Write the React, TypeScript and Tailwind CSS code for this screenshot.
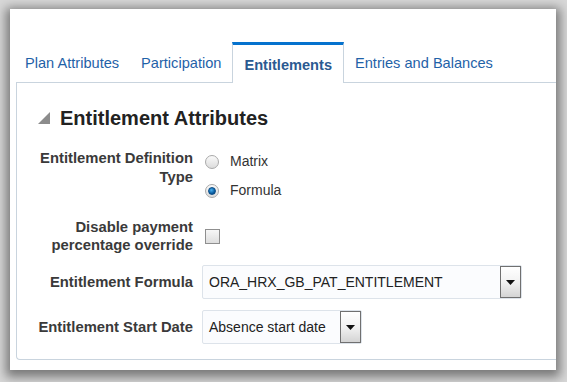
import React from 'react';

const tabs = ['Plan Attributes', 'Participation', 'Entitlements', 'Entries and Balances'];

function Radio({ checked }: { checked?: boolean }) {
  return (
    <span className="w-[14px] h-[14px] rounded-full border border-[#a9a9a9] bg-gradient-to-b from-[#fafafa] to-[#dcdcdc] flex items-center justify-center shrink-0">
      {checked && (
        <span className="w-[8px] h-[8px] rounded-full bg-[radial-gradient(circle_at_40%_35%,#4ab0f0,#0a5fa3_60%,#083f70)] border border-[#0b4c86]" />
      )}
    </span>
  );
}

function DropButton() {
  return (
    <span className="w-[21px] h-[32px] border border-[#707070] bg-gradient-to-b from-[#ffffff] via-[#f2f2f2] to-[#d4d4d4] flex items-center justify-center shrink-0">
      <svg width="9" height="5" viewBox="0 0 9 5">
        <path d="M0 0 L9 0 L4.5 5 Z" fill="#111" />
      </svg>
    </span>
  );
}

function Select({ value, width }: { value: string; width: string }) {
  return (
    <div className={`${width} h-[34px] border border-[#dde3ea] bg-[#fbfcfe] rounded-[2px] flex items-center justify-between pl-[6px]`}>
      <span className="text-[14px] text-[#222]">{value}</span>
      <DropButton />
    </div>
  );
}

export default function App() {
  return (
    <div
      className="w-[567px] h-[382px] bg-[#d8d8d8] pt-[9px] pl-[10px] overflow-hidden"
      style={{ fontFamily: '"Liberation Sans", Arial, sans-serif' }}
    >
      <div className="w-[546px] h-[361px] bg-white shadow-[0_3px_10px_4px_rgba(0,0,0,0.45)]">
        {/* tabs */}
        <div className="flex items-end pt-[33px] pl-[4px]">
          {tabs.map((t) =>
            t === 'Entitlements' ? (
              <div
                key={t}
                className="relative z-10 -mb-px h-[41px] px-[11px] pt-[3px] flex items-center border-t-[3px] border-t-[#0572ce] border-x border-x-[#c9d4de] bg-white text-[14.6px] font-bold text-[#2b5a91]"
              >
                {t}
              </div>
            ) : (
              <div key={t} className="h-[40px] px-[11px] pt-[3px] flex items-center text-[14.6px] text-[#1f62a8]">
                {t}
              </div>
            )
          )}
        </div>

        {/* panel */}
        <div className="ml-[6px] h-[278px] border border-r-0 border-[#c9d4de] rounded-bl-[4px]">
          <div className="flex items-center pt-[23px] pl-[21px] h-[47px]">
            <svg width="12" height="12" viewBox="0 0 12 12" className="mr-[10px]">
              <path d="M12 0 L12 12 L0 12 Z" fill="#8c8c8c" />
            </svg>
            <span className="text-[20px] font-bold text-[#222] leading-[24px]">Entitlement Attributes</span>
          </div>

          <div className="text-[14px] text-[#333]">
            {/* definition type */}
            <div className="flex mt-[17px]">
              <div className="w-[176px] text-right font-bold text-[14.8px] text-[#3a3a3a] leading-[19px] pt-[2px]">
                Entitlement Definition
                <br />
                Type
              </div>
              <div className="ml-[12px] flex flex-col">
                <div className="h-[29px] flex items-center gap-[11px]">
                  <Radio />
                  <span>Matrix</span>
                </div>
                <div className="h-[29px] flex items-center gap-[11px]">
                  <Radio checked />
                  <span>Formula</span>
                </div>
              </div>
            </div>

            {/* disable payment */}
            <div className="flex items-center mt-[13px] h-[36px]">
              <div className="w-[176px] text-right font-bold text-[14.8px] text-[#3a3a3a] leading-[18px]">
                Disable payment
                <br />
                percentage override
              </div>
              <span className="ml-[12px] w-[15px] h-[15px] border border-[#8f8f8f] bg-gradient-to-b from-[#f7f7f7] to-[#dedede]" />
            </div>

            {/* formula */}
            <div className="flex items-center mt-[11px]">
              <div className="w-[176px] text-right font-bold text-[14.8px] text-[#3a3a3a]">Entitlement Formula</div>
              <div className="ml-[9px]">
                <Select value="ORA_HRX_GB_PAT_ENTITLEMENT" width="w-[320px]" />
              </div>
            </div>

            {/* start date */}
            <div className="flex items-center mt-[11px]">
              <div className="w-[176px] text-right font-bold text-[14.8px] text-[#3a3a3a]">Entitlement Start Date</div>
              <div className="ml-[9px]">
                <Select value="Absence start date" width="w-[160px]" />
              </div>
            </div>
          </div>
        </div>
      </div>
    </div>
  );
}
